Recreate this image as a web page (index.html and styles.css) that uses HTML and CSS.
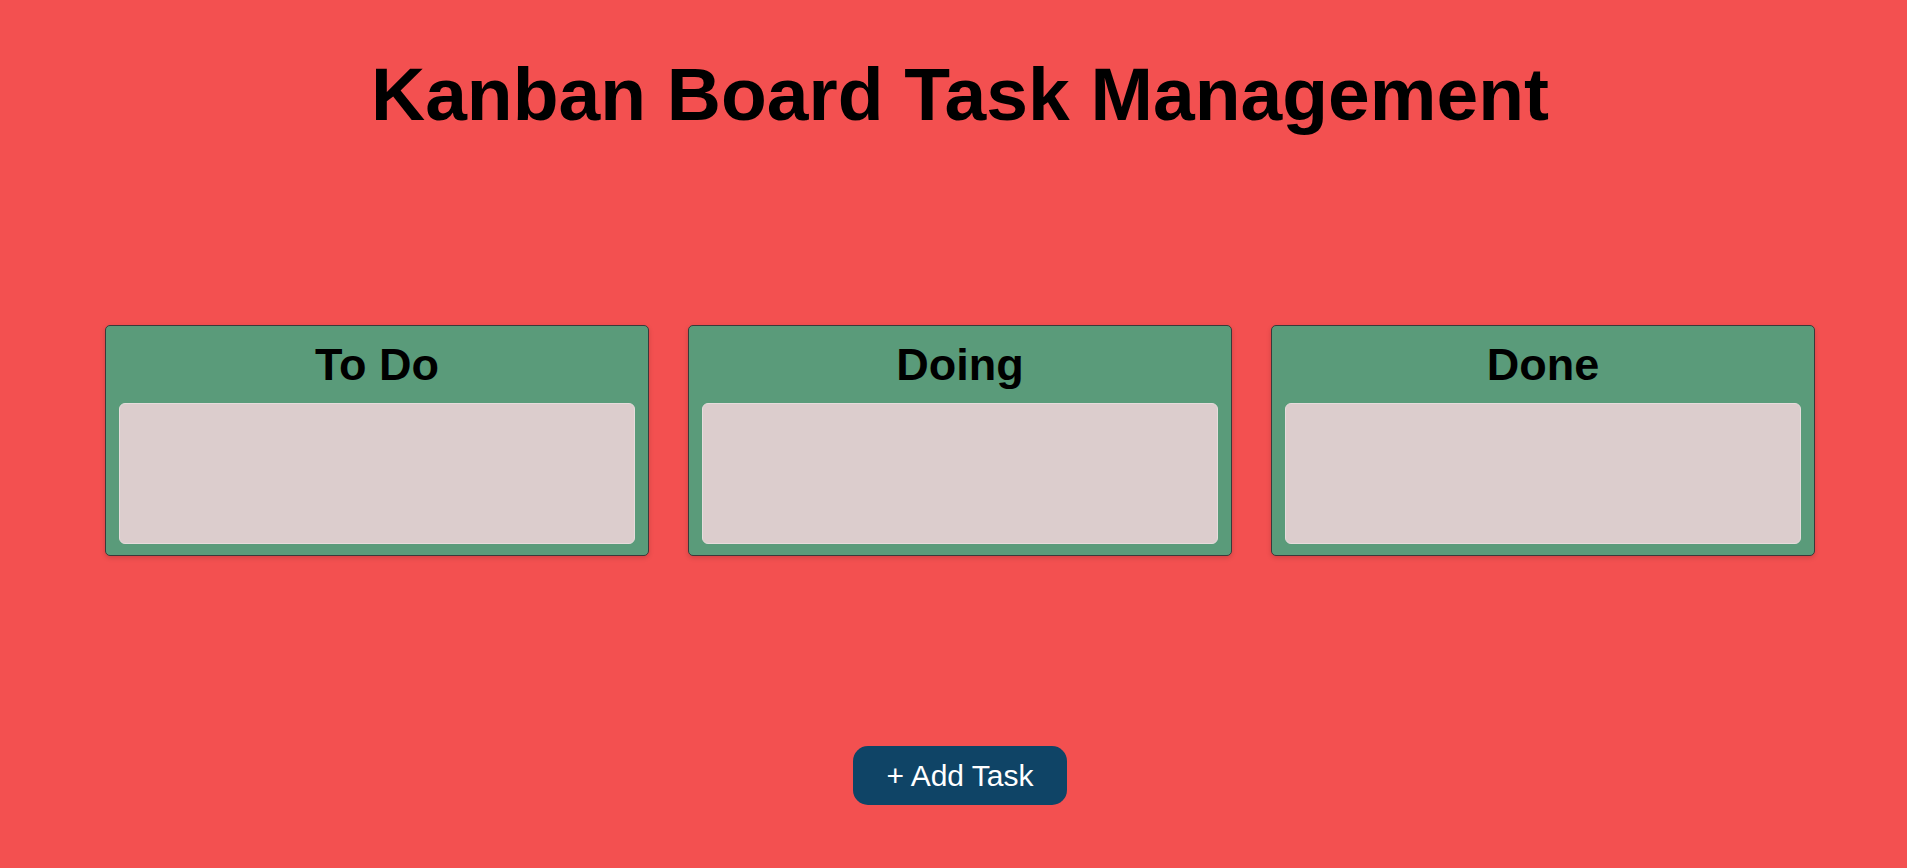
FILE: index.html
```html
<!DOCTYPE html>
<html lang="en">
<head>
<meta charset="utf-8">
<title>Kanban Board Task Management</title>
<link rel="stylesheet" href="styles.css">
</head>
<body>
<main class="page">
  <h1 class="title">Kanban Board Task Management</h1>
  <section class="board">
    <div class="column">
      <h2 class="column-title">To Do</h2>
      <div class="task-list"></div>
    </div>
    <div class="column">
      <h2 class="column-title">Doing</h2>
      <div class="task-list"></div>
    </div>
    <div class="column">
      <h2 class="column-title">Done</h2>
      <div class="task-list"></div>
    </div>
  </section>
  <div class="actions">
    <button class="add-btn" type="button">+ Add Task</button>
  </div>
</main>
</body>
</html>
```

FILE: styles.css
```css
html, body {
  margin: 0;
  padding: 0;
  height: 100%;
}

body {
  background: #f35050;
  font-family: "Liberation Sans", Arial, sans-serif;
  color: #000;
  overflow: hidden;
}

.page {
  padding: 51px 0 0 13px;
  display: flex;
  flex-direction: column;
}

.title {
  margin: 0;
  font-size: 75px;
  font-weight: bold;
  line-height: 1.15;
  text-align: center;
}

.board {
  display: grid;
  grid-template-columns: repeat(3, 1fr);
  gap: 39px;
  margin: 188px 92px 0;
}

.column {
  background: #5a9b7a;
  border: 1px solid #3a3a3a;
  border-radius: 5px;
  padding: 13px 13px 11px;
  box-shadow: 0 2px 5px rgba(0, 0, 0, 0.15);
}

.column-title {
  margin: 0 0 12px;
  font-size: 45px;
  font-weight: bold;
  line-height: 1.15;
  text-align: center;
}

.task-list {
  height: 139px;
  background: #dccdcd;
  border: 1px solid #e6dcdc;
  border-radius: 6px;
}

.actions {
  display: flex;
  justify-content: center;
  margin-top: 190px;
}

.add-btn {
  font-family: "Liberation Sans", Arial, sans-serif;
  font-size: 30px;
  color: #ffffff;
  background: #0f4466;
  border: none;
  border-radius: 15px;
  padding: 12px 33px;
  line-height: 35px;
  cursor: pointer;
}
```
